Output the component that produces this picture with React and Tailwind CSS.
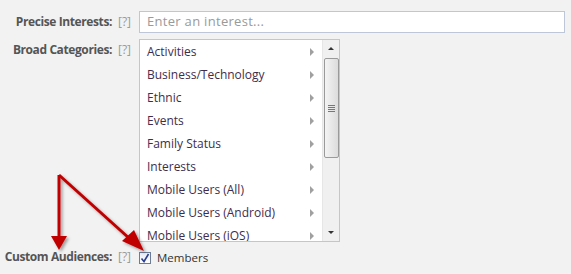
import React from "react";

const categories = [
  "Activities",
  "Business/Technology",
  "Ethnic",
  "Events",
  "Family Status",
  "Interests",
  "Mobile Users (All)",
  "Mobile Users (Android)",
  "Mobile Users (iOS)",
];

const Label = ({ children }) => (
  <div className="flex justify-end items-center gap-[6px] pr-[8px] text-[12px] leading-[16px] whitespace-nowrap">
    <span className="font-bold text-[#555] tracking-[-0.4px]">{children}</span>
    <span className="text-[#9a9a9a]">[?]</span>
  </div>
);

const Scrollbar = () => (
  <div className="w-[17px] flex flex-col items-center bg-[#f0f0f0] border-l border-[#e6e6e6]">
    <div className="h-[17px] w-full flex items-center justify-center">
      <div className="w-0 h-0 border-l-[3px] border-r-[3px] border-b-[3px] border-l-transparent border-r-transparent border-b-[#333]" />
    </div>
    <div className="mt-[1px] h-[100px] w-[15px] rounded-[2px] border border-[#9a9a9a] bg-gradient-to-r from-[#f4f4f4] to-[#dcdcdc] flex flex-col items-center justify-center gap-[1px]">
      <div className="w-[7px] h-px bg-[#777]" />
      <div className="w-[7px] h-px bg-[#777]" />
      <div className="w-[7px] h-px bg-[#777]" />
      <div className="w-[7px] h-px bg-[#777]" />
    </div>
    <div className="flex-1" />
    <div className="h-[17px] w-full flex items-center justify-center">
      <div className="w-0 h-0 border-l-[3px] border-r-[3px] border-t-[3px] border-l-transparent border-r-transparent border-t-[#333]" />
    </div>
  </div>
);

export default function App() {
  return (
    <div
      className="relative w-[571px] h-[274px] bg-[#f2f2f2] overflow-hidden"
      style={{ fontFamily: '"Open Sans", "Noto Sans", sans-serif' }}
    >
      <div className="grid grid-cols-[139px_1fr] pt-[11px] pr-[6px]">
        {/* Precise Interests */}
        <Label>Precise Interests:</Label>
        <div className="h-[22px] bg-white border border-[#bdc7d8] flex items-center px-[7px] text-[13px] tracking-[0.3px] text-[#9a9a9a]">
          Enter an interest...
        </div>

        {/* Broad Categories */}
        <div className="pt-[3px] mt-[6px]">
          <Label>Broad Categories:</Label>
        </div>
        <div className="mt-[6px] w-[201px] h-[203px] bg-white border border-[#bdc7d8] flex overflow-hidden">
          <div className="flex-1 flex flex-col">
            {categories.map((c) => (
              <div
                key={c}
                className="h-[23px] shrink-0 flex items-center justify-between pl-[7px] pr-[8px] text-[12px] text-[#3f2d4c]"
              >
                <span>{c}</span>
                <div className="w-0 h-0 border-t-[4px] border-b-[4px] border-l-[4px] border-t-transparent border-b-transparent border-l-[#a0a0a0]" />
              </div>
            ))}
          </div>
          <Scrollbar />
        </div>

        {/* Custom Audiences */}
        <div className="mt-[7px]">
          <Label>Custom Audiences:</Label>
        </div>
        <div className="mt-[7px] flex items-center gap-[6px] text-[11.5px] text-[#333]">
          <div className="w-[12px] h-[12px] border border-[#6d7c96] bg-gradient-to-b from-[#e8ecf4] to-[#ffffff] flex items-center justify-center">
            <svg width="10" height="10" viewBox="0 0 10 10">
              <path d="M1.5 5.5 L4 8.5 L8.5 1" fill="none" stroke="#2a3f8f" strokeWidth="1.6" />
            </svg>
          </div>
          <span>Members</span>
        </div>
      </div>

      {/* red annotation arrows */}
      <svg className="absolute left-0 top-0 pointer-events-none" width="571" height="274">
        <defs>
          <filter id="sh" x="-20%" y="-20%" width="140%" height="140%">
            <feDropShadow dx="2" dy="2" stdDeviation="1.5" floodColor="#000" floodOpacity="0.35" />
          </filter>
        </defs>
        <g filter="url(#sh)" fill="#c00000" stroke="#c00000">
          <path d="M59 175 L59 237" strokeWidth="3" fill="none" />
          <path d="M59 175 L130 239" strokeWidth="3" fill="none" />
          <polygon points="51,236 67,236 59,250" stroke="none" />
          <polygon points="122,241 134,230 144,251" stroke="none" />
        </g>
      </svg>
    </div>
  );
}
